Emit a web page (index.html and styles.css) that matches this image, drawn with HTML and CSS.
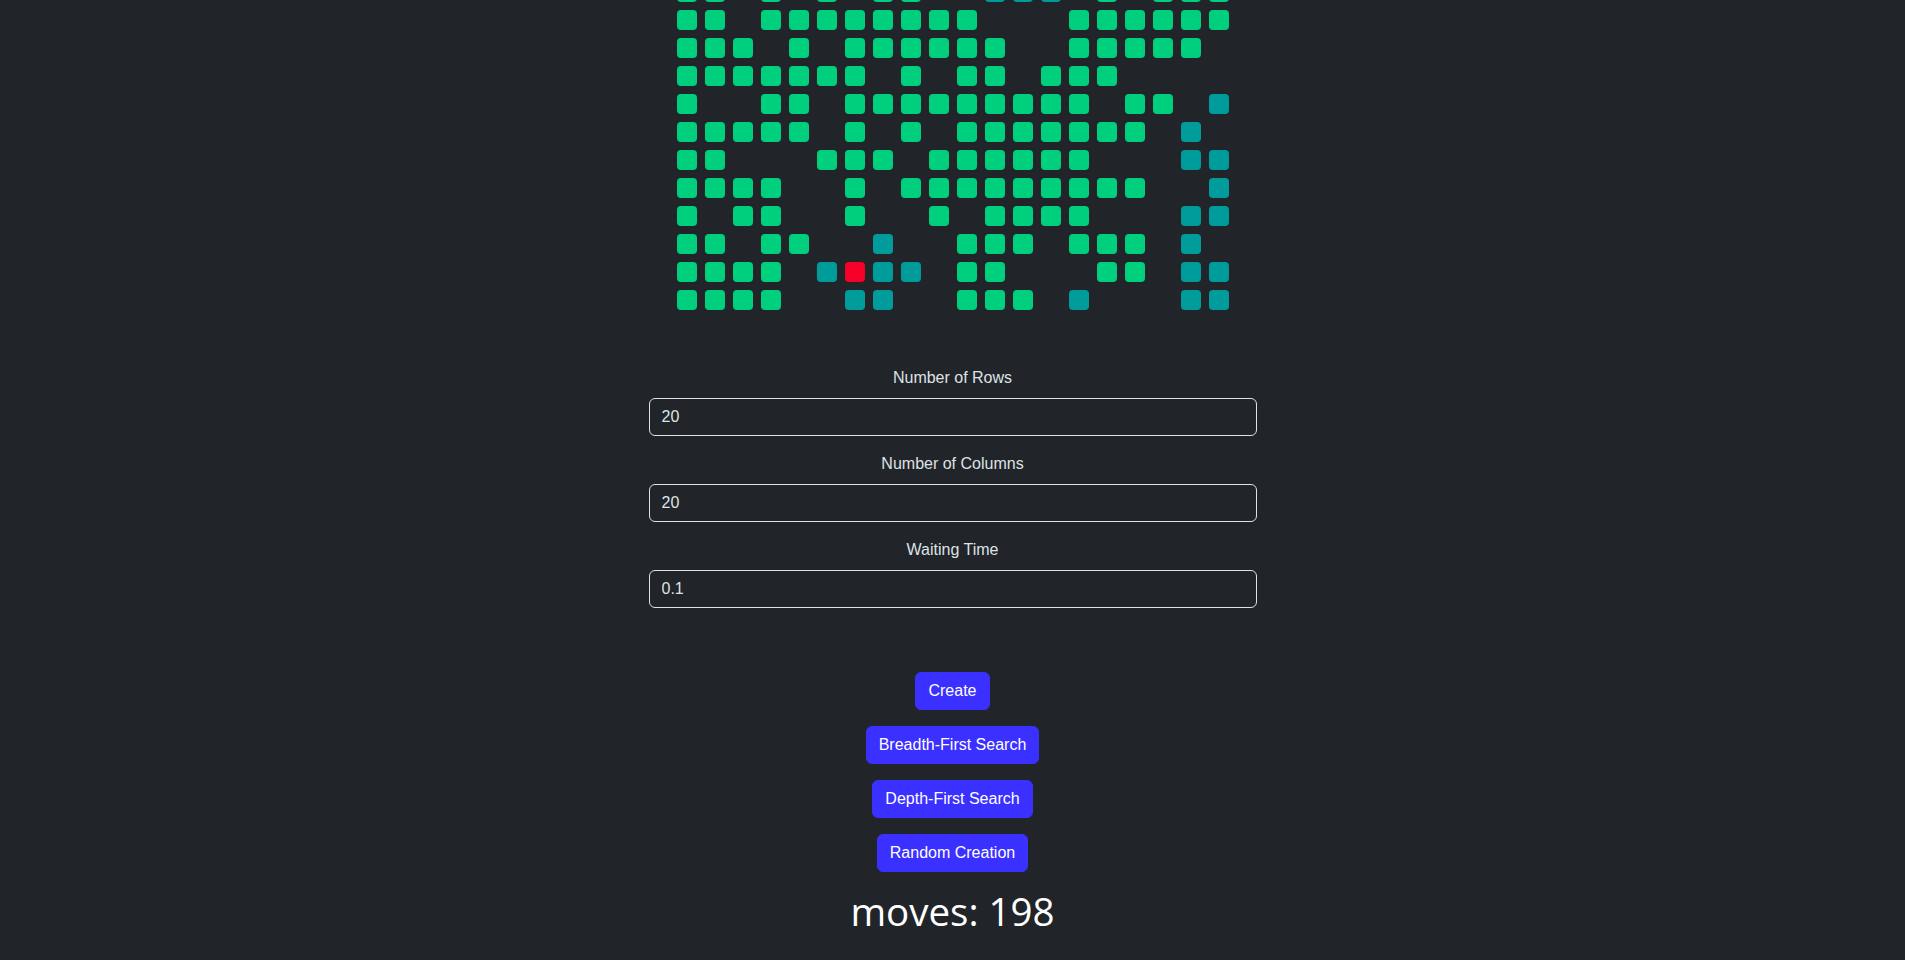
FILE: index.html
```html
<!DOCTYPE html>
<html lang="en">
<head>
<meta charset="utf-8">
<title>Maze Search</title>
<link rel="stylesheet" href="styles.css">
</head>
<body>
<main class="app">
  <div class="board-view">
    <div class="board" id="board"></div>
  </div>
  <form class="settings">
    <label class="field-label" for="rows">Number of Rows</label>
    <input class="field-input" id="rows" type="text" value="20">
    <label class="field-label" for="cols">Number of Columns</label>
    <input class="field-input" id="cols" type="text" value="20">
    <label class="field-label" for="wait">Waiting Time</label>
    <input class="field-input" id="wait" type="text" value="0.1">
  </form>
  <div class="actions">
    <button class="btn" type="button">Create</button>
    <button class="btn" type="button">Breadth-First Search</button>
    <button class="btn" type="button">Depth-First Search</button>
    <button class="btn" type="button">Random Creation</button>
  </div>
  <h1 class="moves">moves: 198</h1>
</main>
<script src="script.js"></script>
</body>
</html>
```
FILE: styles.css
```css
html, body {
  margin: 0;
  padding: 0;
  background: #212529;
  color: #dee2e6;
  font-family: "Liberation Sans", Arial, sans-serif;
  font-size: 16px;
  line-height: 1.5;
}

.app {
  display: flex;
  flex-direction: column;
  align-items: center;
}

.board-view {
  margin-top: -18px;
}

.board {
  display: grid;
  grid-template-columns: repeat(20, 20px);
  grid-auto-rows: 20px;
  gap: 8px;
}

.cell {
  width: 20px;
  height: 20px;
  border-radius: 4px;
}

.cell.wall { background: transparent; }
.cell.open { background: #00cf7e; }
.cell.seen { background: #009c9c; }
.cell.head { background: #f50028; }

.settings {
  width: 608px;
  margin-top: 56px;
  display: flex;
  flex-direction: column;
}

.field-label {
  text-align: center;
  color: #dee2e6;
  margin-bottom: 8px;
}

.field-input {
  height: 38px;
  box-sizing: border-box;
  padding: 6px 12px;
  margin-bottom: 16px;
  background: #212529;
  color: #dee2e6;
  border: 1px solid #dee2e6;
  border-radius: 6px;
  font-family: inherit;
  font-size: 16px;
  outline: none;
}

.actions {
  margin-top: 48px;
  display: flex;
  flex-direction: column;
  align-items: center;
  gap: 16px;
}

.btn {
  height: 38px;
  padding: 6px 12px;
  background: #3a30ff;
  color: #ffffff;
  border: 1px solid #3a30ff;
  border-radius: 6px;
  font-family: inherit;
  font-size: 16px;
  line-height: 24px;
}

.moves {
  margin: 16px 0 8px;
  font-family: "Open Sans", "Noto Sans", sans-serif;
  font-weight: 400;
  font-size: 38.5px;
  line-height: 1.2;
  color: #ffffff;
}
```
FILE: script.js
```js
(function () {
  // o = open path, t = visited, r = current, . = wall
  var rows = [
    "oo.o.o.oo..ttt.o.ooo",
    "oo.oooooooo...oooooo",
    "ooo.o.oooooo..ooooo.",
    "ooooooo.o.oo.ooo....",
    "o..oo.ooooooooo.oo.t",
    "ooooo.o.o.ooooooo.t.",
    "oo...ooo.oooooo...tt",
    "oooo..o.ooooooooo..t",
    "o.oo..o..o.oooo...tt",
    "oo.oo..t..ooo.ooo.t.",
    "oooo.trtt.oo...oo.tt",
    "oooo..tt..ooo.t...tt"
  ];
  var map = { "o": "open", "t": "seen", "r": "head", ".": "wall" };
  var board = document.getElementById("board");
  rows.forEach(function (row) {
    for (var i = 0; i < row.length; i++) {
      var d = document.createElement("div");
      d.className = "cell " + map[row[i]];
      board.appendChild(d);
    }
  });
})();
```
